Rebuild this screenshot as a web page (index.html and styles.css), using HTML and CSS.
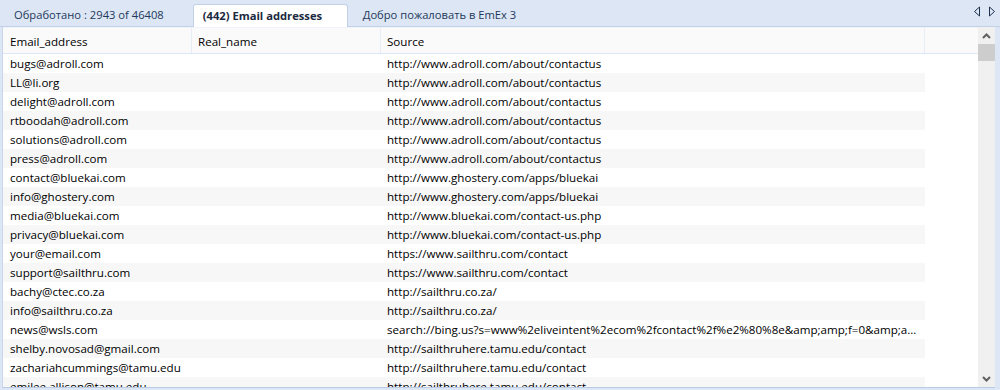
FILE: index.html
```html
<!DOCTYPE html>
<html lang="ru">

<head>
	<meta charset="UTF-8" />
	<title>EmEx 3</title>
	<link rel="stylesheet" href="styles.css">
</head>

<body>
	<div class="tab-bar">
		<div class="tab">Обработано : 2943 of 46408</div>
		<div class="tab active">(442) Email addresses</div>
		<div class="tab">Добро пожаловать в EmEx 3</div>
		<div class="tab-arrows">
			<svg width="8" height="11" viewBox="0 0 8 11"><path d="M6.5 1 L1.5 5.5 L6.5 10 Z" fill="none" stroke="#1e3250" stroke-width="1" /></svg>
			<svg width="8" height="11" viewBox="0 0 8 11"><path d="M1.5 1 L6.5 5.5 L1.5 10 Z" fill="none" stroke="#1e3250" stroke-width="1" /></svg>
		</div>
	</div>

	<div class="panel">
		<div class="grid">
			<div class="row head">
				<div class="cell c-email">Email_address</div>
				<div class="cell c-name">Real_name</div>
				<div class="cell c-src">Source</div>
				<div class="cell c-rest"></div>
			</div>
			<div id="rows"></div>
		</div>
		<div class="scrollbar">
			<div class="sb-btn">
				<svg width="9" height="6" viewBox="0 0 9 6"><path d="M1 5 L4.5 1.5 L8 5" fill="none" stroke="#606060" stroke-width="2" /></svg>
			</div>
			<div class="sb-thumb"></div>
			<div class="sb-track"></div>
			<div class="sb-btn">
				<svg width="9" height="6" viewBox="0 0 9 6"><path d="M1 1 L4.5 4.5 L8 1" fill="none" stroke="#606060" stroke-width="2" /></svg>
			</div>
		</div>
	</div>

	<script>
		const data = [
			["bugs@adroll.com", "http://www.adroll.com/about/contactus"],
			["LL@li.org", "http://www.adroll.com/about/contactus"],
			["delight@adroll.com", "http://www.adroll.com/about/contactus"],
			["rtboodah@adroll.com", "http://www.adroll.com/about/contactus"],
			["solutions@adroll.com", "http://www.adroll.com/about/contactus"],
			["press@adroll.com", "http://www.adroll.com/about/contactus"],
			["contact@bluekai.com", "http://www.ghostery.com/apps/bluekai"],
			["info@ghostery.com", "http://www.ghostery.com/apps/bluekai"],
			["media@bluekai.com", "http://www.bluekai.com/contact-us.php"],
			["privacy@bluekai.com", "http://www.bluekai.com/contact-us.php"],
			["your@email.com", "https://www.sailthru.com/contact"],
			["support@sailthru.com", "https://www.sailthru.com/contact"],
			["bachy@ctec.co.za", "http://sailthru.co.za/"],
			["info@sailthru.co.za", "http://sailthru.co.za/"],
			["news@wsls.com", "search://bing.us?s=www%2eliveintent%2ecom%2fcontact%2f%e2%80%8e&amp;amp;amp;f=0&amp;amp;a…"],
			["shelby.novosad@gmail.com", "http://sailthruhere.tamu.edu/contact"],
			["zachariahcummings@tamu.edu", "http://sailthruhere.tamu.edu/contact"],
			["emilee.allison@tamu.edu", "http://sailthruhere.tamu.edu/contact"]
		];

		const rows = document.getElementById('rows');
		data.forEach((item, i) => {
			const div = document.createElement('div');
			div.className = i % 2 ? 'row alt' : 'row';
			div.innerHTML = `<div class="cell c-email">${item[0]}</div><div class="cell c-name"></div><div class="cell c-src">${item[1]}</div><div class="cell c-rest"></div>`;
			rows.appendChild(div);
		});
	</script>
</body>

</html>
```

FILE: styles.css
```css
body {
	margin: 0;
	width: 1000px;
	height: 390px;
	overflow: hidden;
	background-color: #dce6f4;
	font-family: "Segoe UI", "Open Sans", sans-serif;
	font-size: 11.6px;
	color: #000;
}

.tab-bar {
	display: flex;
	align-items: flex-end;
	height: 27px;
	padding-left: 3px;
	border-bottom: 1px solid #c3d1e6;
	box-sizing: border-box;
}

.tab {
	height: 22px;
	line-height: 22px;
	padding: 0 11px;
	color: #1e395b;
	font-size: 11.2px;
	box-sizing: border-box;
	white-space: nowrap;
}

.tab.active {
	background-color: #fff;
	border: 1px solid #c3d1e6;
	border-bottom: none;
	border-radius: 3px 3px 0 0;
	font-weight: bold;
	color: #1b2a40;
	width: 155px;
	height: 23px;
	padding: 0 9px;
	margin: 0 4px -1px 18px;
}

.tab-arrows {
	margin-left: auto;
	align-self: flex-start;
	display: flex;
	gap: 7px;
	padding: 6px 4px 0 0;
}

.panel {
	display: flex;
	height: 360px;
	margin-left: 2px;
	margin-right: 5px;
	border-left: 1px solid #c9d7ec;
	border-bottom: 1px solid #b9cbe4;
	background-color: #fff;
	overflow: hidden;
}

.grid {
	flex: 1;
	overflow: hidden;
}

.row {
	display: flex;
	height: 19px;
	line-height: 19px;
}

.row.alt .cell.c-email,
.row.alt .cell.c-name,
.row.alt .cell.c-src {
	background-color: #f7f7f7;
}

.row.head {
	height: 25px;
	line-height: 27px;
	background-color: #fafafa;
	border-bottom: 1px solid #dde7f5;
	border-top: 1px solid #f0f4fa;
}

.row.head .cell {
	border-right: 1px solid #e6edf7;
}

.row.head .c-rest {
	border-right: none;
}

.cell {
	box-sizing: border-box;
	white-space: nowrap;
	overflow: hidden;
	padding-left: 7px;
}

.c-email {
	width: 189px;
}

.c-name {
	width: 189px;
	padding-left: 6px;
}

.c-src {
	width: 544px;
	padding-left: 6px;
}

.c-rest {
	flex: 1;
}

.scrollbar {
	width: 17px;
	display: flex;
	flex-direction: column;
	background-color: #f0f0f0;
}

.sb-btn {
	height: 17px;
	display: flex;
	align-items: center;
	justify-content: center;
}

.sb-thumb {
	height: 17px;
	background-color: #cdcdcd;
}

.sb-track {
	flex: 1;
}
```
